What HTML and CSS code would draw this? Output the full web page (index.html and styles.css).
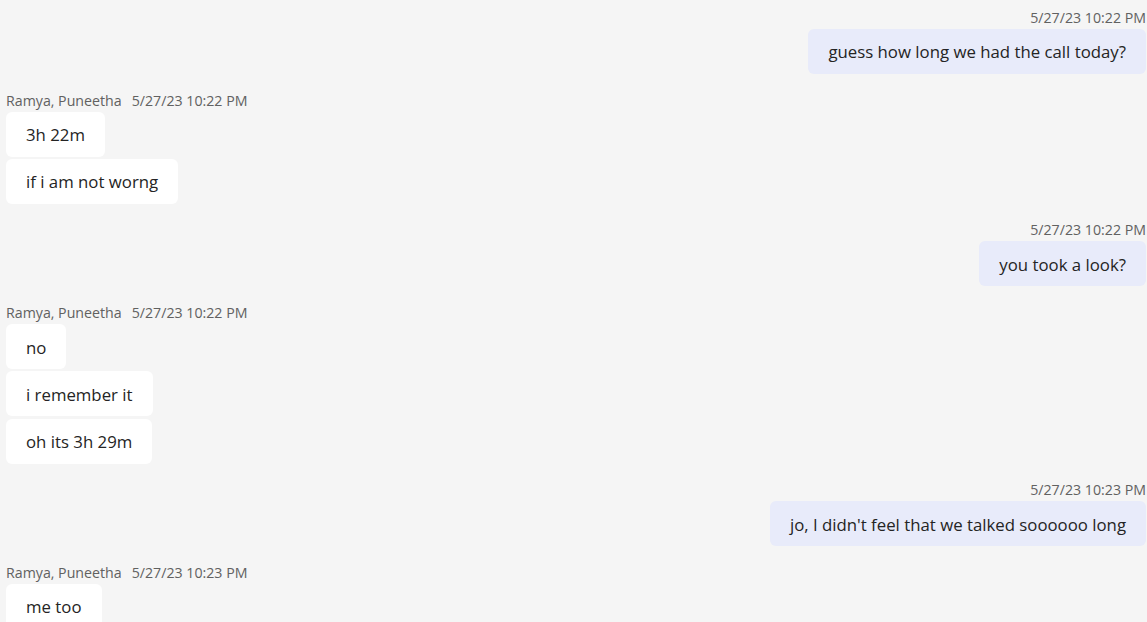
FILE: index.html
```html
<!DOCTYPE html>
<html>
<head>
<meta charset="utf-8">
<link rel="stylesheet" href="styles.css">
</head>
<body>
<div class="chat">
  <div class="group mine">
    <div class="meta"><span class="time">5/27/23 10:22 PM</span></div>
    <div class="bubble">guess how long we had the call today?</div>
  </div>
  <div class="group theirs">
    <div class="meta"><span class="name">Ramya, Puneetha</span><span class="time">5/27/23 10:22 PM</span></div>
    <div class="bubble">3h 22m</div>
    <div class="bubble">if i am not worng</div>
  </div>
  <div class="group mine">
    <div class="meta"><span class="time">5/27/23 10:22 PM</span></div>
    <div class="bubble">you took a look?</div>
  </div>
  <div class="group theirs">
    <div class="meta"><span class="name">Ramya, Puneetha</span><span class="time">5/27/23 10:22 PM</span></div>
    <div class="bubble">no</div>
    <div class="bubble">i remember it</div>
    <div class="bubble">oh its 3h 29m</div>
  </div>
  <div class="group mine">
    <div class="meta"><span class="time">5/27/23 10:23 PM</span></div>
    <div class="bubble">jo, I didn't feel that we talked soooooo long</div>
  </div>
  <div class="group theirs">
    <div class="meta"><span class="name">Ramya, Puneetha</span><span class="time">5/27/23 10:23 PM</span></div>
    <div class="bubble">me too</div>
  </div>
</div>
</body>
</html>
```
FILE: styles.css
```css
html, body {
  margin: 0;
  padding: 0;
  background: #f5f5f5;
  height: 100%;
  overflow: hidden;
}
body {
  font-family: "Open Sans", "Noto Sans", sans-serif;
  color: #242424;
}
.chat {
  display: flex;
  flex-direction: column;
  gap: 15.1px;
  padding: 6.5px 1px 0 6px;
}
.group {
  display: flex;
  flex-direction: column;
  gap: 2.3px;
}
.mine {
  align-items: flex-end;
}
.theirs {
  align-items: flex-start;
}
.meta {
  display: flex;
  gap: 10px;
  height: 20px;
  box-sizing: border-box;
  padding-top: 2px;
  align-items: center;
  font-size: 14.2px;
  color: #616161;
  margin-bottom: 0.2px;
}
.bubble {
  background: #ffffff;
  border-radius: 6px;
  padding: 2px 20px 0;
  height: 45px;
  box-sizing: border-box;
  display: flex;
  align-items: center;
  font-size: 16.8px;
  line-height: 22px;
}
.mine .bubble {
  background: #e8ebfa;
}
```
